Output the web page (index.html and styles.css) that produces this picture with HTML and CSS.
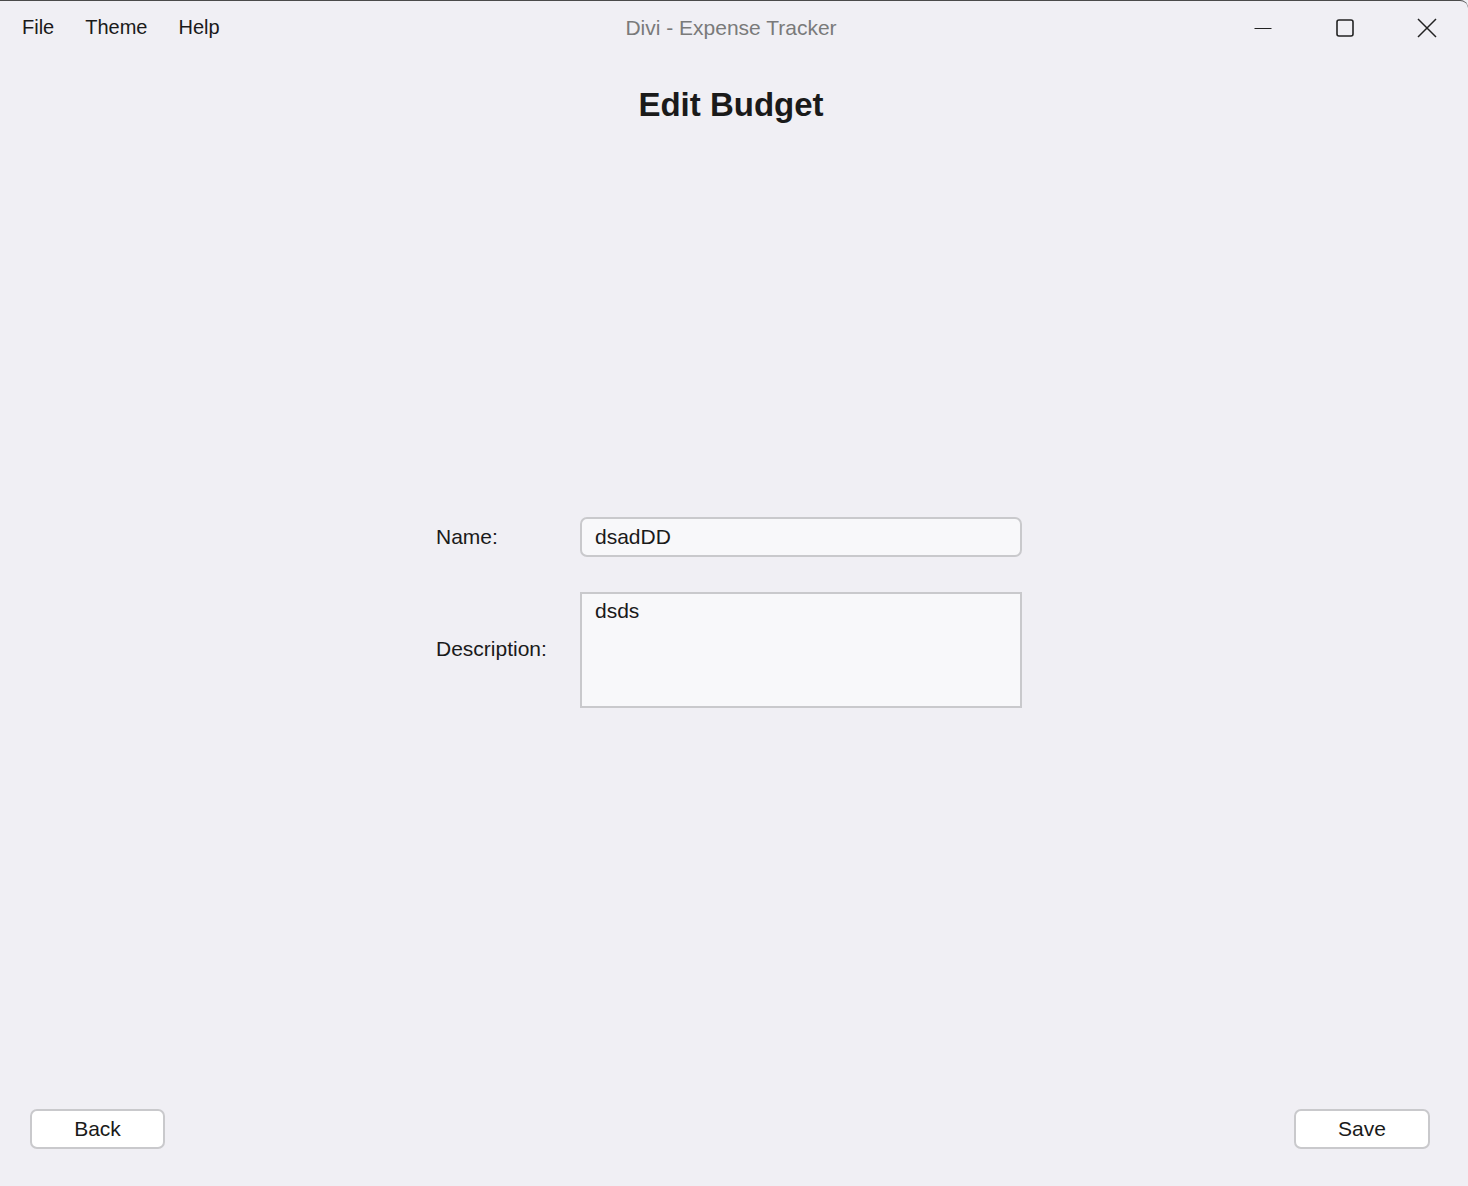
FILE: index.html
```html
<!DOCTYPE html>
<html lang="en">
<head>
<meta charset="utf-8">
<title>Divi - Expense Tracker</title>
<link rel="stylesheet" href="styles.css">
</head>
<body>
<div class="window">
  <header class="titlebar">
    <nav class="menu">
      <span class="menu-item">File</span>
      <span class="menu-item">Theme</span>
      <span class="menu-item">Help</span>
    </nav>
    <div class="title">Divi - Expense Tracker</div>
    <div class="controls">
      <span class="ctrl">
        <svg width="18" height="18" viewBox="0 0 18 18"><path d="M0.5 9.5H17.5" stroke="#222" stroke-width="1.2" fill="none"/></svg>
      </span>
      <span class="ctrl">
        <svg width="18" height="18" viewBox="0 0 18 18"><rect x="1" y="1" width="16" height="16" rx="2" stroke="#222" stroke-width="1.6" fill="none"/></svg>
      </span>
      <span class="ctrl">
        <svg width="20" height="20" viewBox="0 0 20 20"><path d="M1 1L19 19M19 1L1 19" stroke="#222" stroke-width="1.5" fill="none"/></svg>
      </span>
    </div>
  </header>

  <h1 class="heading">Edit Budget</h1>

  <main class="content">
    <form class="form">
      <label class="label">Name:</label>
      <div class="field">dsadDD</div>
      <label class="label label-desc">Description:</label>
      <div class="area">dsds</div>
    </form>
  </main>

  <footer class="footer">
    <button class="btn" type="button">Back</button>
    <button class="btn btn-save" type="button">Save</button>
  </footer>
</div>
</body>
</html>
```

FILE: styles.css
```css
html, body {
  margin: 0;
  padding: 0;
  height: 100%;
}
body {
  background: #f0eff4;
  font-family: "Liberation Sans", Arial, sans-serif;
  color: #1a1a1a;
}
.window {
  height: 1186px;
  box-sizing: border-box;
  display: flex;
  flex-direction: column;
  border-top: 1px solid #4a4a4a;
  border-top-right-radius: 8px;
  background: #f0eff4;
  overflow: hidden;
}
.titlebar {
  height: 53px;
  display: grid;
  grid-template-columns: 1fr auto 1fr;
  align-items: center;
  font-size: 20px;
}
.menu {
  display: flex;
  gap: 31px;
  padding-left: 22px;
}
.menu-item {
  color: #1a1a1a;
}
.title {
  color: #7a7a7a;
  text-align: center;
  font-size: 21px;
  padding-right: 6px;
}
.controls {
  display: flex;
  justify-content: flex-end;
  height: 53px;
}
.ctrl {
  width: 82px;
  display: flex;
  align-items: center;
  justify-content: center;
}
.heading {
  margin: 31px 0 0;
  height: 40px;
  line-height: 40px;
  font-size: 33px;
  font-weight: bold;
  text-align: center;
  color: #1a1a1a;
  padding-right: 6px;
}
.content {
  flex: 1;
  display: flex;
  align-items: center;
  justify-content: center;
  padding-right: 10px;
}
.form {
  display: grid;
  grid-template-columns: 144px 442px;
  row-gap: 35px;
  align-items: center;
  font-size: 21px;
}
.label {
  color: #1a1a1a;
}
.label-desc {
  margin-bottom: 3px;
}
.field {
  box-sizing: border-box;
  height: 40px;
  padding: 0 13px;
  display: flex;
  align-items: center;
  background: #f8f8fa;
  border: 2px solid #c9c9cc;
  border-radius: 7px;
}
.area {
  box-sizing: border-box;
  height: 116px;
  padding: 5px 13px;
  background: #f8f8fa;
  border: 2px solid #c9c9cc;
}
.footer {
  display: flex;
  justify-content: space-between;
  padding: 9px 38px 37px 30px;
}
.btn {
  box-sizing: border-box;
  width: 135px;
  height: 40px;
  background: #ffffff;
  border: 2px solid #c9c9cc;
  border-radius: 7px;
  font-family: "Liberation Sans", Arial, sans-serif;
  font-size: 21px;
  color: #1a1a1a;
  padding: 0;
}
.btn-save {
  width: 136px;
}
```
